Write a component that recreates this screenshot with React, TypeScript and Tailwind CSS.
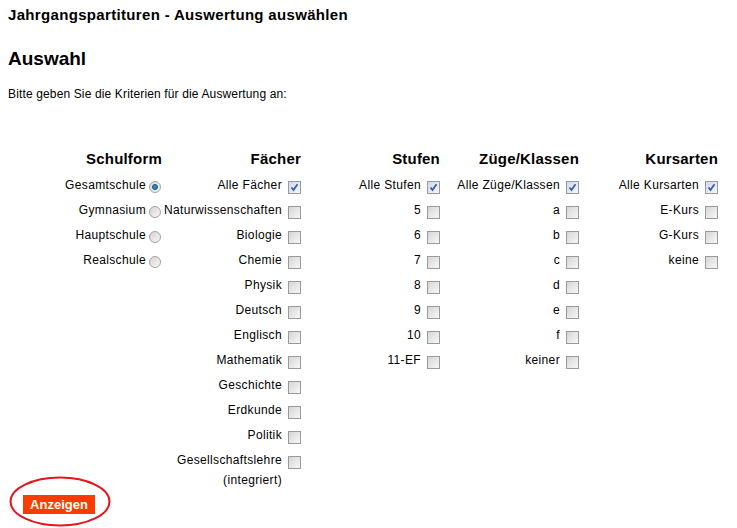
import React from "react";

type Item = { label: string; checked?: boolean; extra?: string };
type Column = { title: string; kind: "radio" | "check"; items: Item[] };

const columns: Column[] = [
  {
    title: "Schulform",
    kind: "radio",
    items: [
      { label: "Gesamtschule", checked: true },
      { label: "Gymnasium" },
      { label: "Hauptschule" },
      { label: "Realschule" },
    ],
  },
  {
    title: "Fächer",
    kind: "check",
    items: [
      { label: "Alle Fächer", checked: true },
      { label: "Naturwissenschaften" },
      { label: "Biologie" },
      { label: "Chemie" },
      { label: "Physik" },
      { label: "Deutsch" },
      { label: "Englisch" },
      { label: "Mathematik" },
      { label: "Geschichte" },
      { label: "Erdkunde" },
      { label: "Politik" },
      { label: "Gesellschaftslehre", extra: "(integriert)" },
    ],
  },
  {
    title: "Stufen",
    kind: "check",
    items: [
      { label: "Alle Stufen", checked: true },
      { label: "5" },
      { label: "6" },
      { label: "7" },
      { label: "8" },
      { label: "9" },
      { label: "10" },
      { label: "11-EF" },
    ],
  },
  {
    title: "Züge/Klassen",
    kind: "check",
    items: [
      { label: "Alle Züge/Klassen", checked: true },
      { label: "a" },
      { label: "b" },
      { label: "c" },
      { label: "d" },
      { label: "e" },
      { label: "f" },
      { label: "keiner" },
    ],
  },
  {
    title: "Kursarten",
    kind: "check",
    items: [
      { label: "Alle Kursarten", checked: true },
      { label: "E-Kurs" },
      { label: "G-Kurs" },
      { label: "keine" },
    ],
  },
];

const Checkbox = ({ checked }: { checked?: boolean }) => (
  <span className="ml-[6px] mt-[6px] flex h-[13px] w-[13px] shrink-0 items-center justify-center border border-[#9a9a9a] bg-white">
    <span
      className={
        checked
          ? "flex h-[11px] w-[11px] items-center justify-center bg-gradient-to-br from-[#cfd9ec] to-[#f4f7fc]"
          : "h-[11px] w-[11px] bg-gradient-to-br from-[#d6d6d6] to-[#f7f7f7]"
      }
    >
      {checked && (
        <svg width="9" height="9" viewBox="0 0 9 9">
          <path d="M1.5 4.5 L3.5 7 L7.5 1.2" fill="none" stroke="#3c5fa8" strokeWidth="1.8" />
        </svg>
      )}
    </span>
  </span>
);

const Radio = ({ checked }: { checked?: boolean }) => (
  <span className="ml-[3px] mr-[1px] mt-[6px] flex h-[12px] w-[12px] shrink-0 items-center justify-center rounded-full border border-[#a3a3a3] bg-gradient-to-br from-[#d4d4d4] to-[#f8f8f8]">
    {checked && (
      <span className="h-[6px] w-[6px] rounded-full border border-[#1d4f7c] bg-[#2f86cf]" />
    )}
  </span>
);

export default function App() {
  return (
    <div className="min-h-[528px] bg-white px-[8px] font-['Liberation_Sans',Arial,sans-serif] text-black">
      <h1 className="pt-[6px] text-[15px] font-bold leading-[18px] tracking-[0.33px]">
        Jahrgangspartituren - Auswertung auswählen
      </h1>
      <h2 className="mt-[24px] text-[19px] font-bold leading-[22px]">Auswahl</h2>
      <p className="mt-[17px] text-[12px] leading-[14px] tracking-[0.14px]">
        Bitte geben Sie die Kriterien für die Auswertung an:
      </p>

      <div className="ml-[15px] mt-[49px] grid grid-cols-[repeat(5,139px)] items-start">
        {columns.map((col) => (
          <div key={col.title} className="flex flex-col items-end">
            <div className="mb-[7px] text-[15px] font-bold leading-[18px] tracking-[0.2px]">
              {col.title}
            </div>
            {col.items.map((item) => (
              <div
                key={item.label}
                className={`flex items-start justify-end text-[12px] tracking-[0.35px] ${item.extra ? "" : "h-[25px]"}`}
              >
                <span className="mt-[3px] flex flex-col items-end leading-[14px]">
                  <span>{item.label}</span>
                  {item.extra && <span className="mt-[6px]">{item.extra}</span>}
                </span>
                {col.kind === "radio" ? (
                  <Radio checked={item.checked} />
                ) : (
                  <Checkbox checked={item.checked} />
                )}
              </div>
            ))}
          </div>
        ))}
      </div>

      <div className="relative ml-[15px] mt-[8px] w-[72px]">
        <button className="flex h-[19px] w-[72px] items-center justify-center bg-[#fa3c00] text-[13px] font-bold text-white">
          Anzeigen
        </button>
        <svg
          className="pointer-events-none absolute left-[-14px] top-[-19px]"
          width="102"
          height="51"
          viewBox="0 0 102 51"
        >
          <ellipse cx="51" cy="25.5" rx="49.5" ry="24" fill="none" stroke="#e8141b" strokeWidth="2" />
        </svg>
      </div>
    </div>
  );
}
